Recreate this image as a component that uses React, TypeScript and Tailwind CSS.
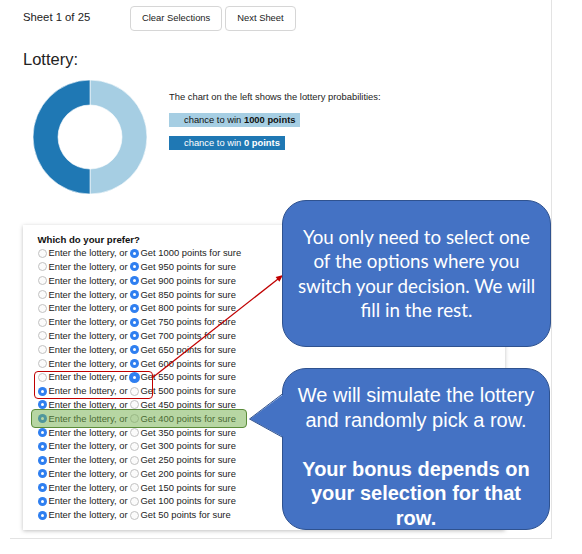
const rows = [1000, 950, 900, 850, 800, 750, 700, 650, 600, 550, 500, 450, 400, 350, 300, 250, 200, 150, 100, 50];

function Radio({ checked, focus }: { checked: boolean; focus?: boolean }) {
  if (checked) {
    return (
      <span
        className={`inline-flex items-center justify-center rounded-full bg-[#2f7ff0] shrink-0 ${
          focus ? 'w-[11px] h-[11px] -mx-[1px]' : 'w-[9px] h-[9px]'
        }`}
      >
        <span className="w-[3px] h-[3px] rounded-full bg-white" />
      </span>
    );
  }
  return <span className="inline-block w-[9px] h-[9px] rounded-full border border-[#c2c2c2] bg-[#fbfbfb] shrink-0" />;
}

export default function App() {
  return (
    <div className="relative w-[582px] h-[554px] bg-white overflow-hidden" style={{ fontFamily: '"Liberation Sans", Arial, sans-serif' }}>
      {/* page */}
      <div className="ml-[10px] w-[542px] h-[539px] border-r border-b border-[#e3e3e3] pl-[13px] pt-[6px] text-[#222]">
        {/* header */}
        <div className="flex items-center h-[25px]">
          <span className="w-[107px] text-[11.3px] -mt-[3px]">Sheet 1 of 25</span>
          <button className="h-[25px] px-[11px] border border-[#d6d6d6] rounded-[4px] bg-white text-[9.4px]">Clear Selections</button>
          <button className="ml-[3px] h-[25px] px-[11px] border border-[#d6d6d6] rounded-[4px] bg-white text-[9.4px]">Next Sheet</button>
        </div>

        <h1 className="mt-[19px] text-[16.5px] leading-[19px]">Lottery:</h1>

        {/* chart */}
        <div className="mt-[10px] flex">
          <svg width="116" height="116" viewBox="0 0 116 116" className="ml-[9px]">
            <path d="M 58 1 A 57 57 0 0 1 58 115 L 58 90 A 32 32 0 0 0 58 26 Z" fill="#a6cee3" stroke="#fff" strokeWidth="0.6" />
            <path d="M 58 115 A 57 57 0 0 1 58 1 L 58 26 A 32 32 0 0 0 58 90 Z" fill="#1f78b4" stroke="#fff" strokeWidth="0.6" />
          </svg>
          <div className="ml-[21px] pt-[12px] text-[9.4px]">
            <p className="leading-[12px]">The chart on the left shows the lottery probabilities:</p>
            <div className="mt-[10px] w-[131px] h-[14px] bg-[#a6cee3] pl-[15px] leading-[14px] text-[#111]">
              chance to win <b>1000 points</b>
            </div>
            <div className="mt-[9px] w-[116px] h-[14px] bg-[#1f78b4] pl-[15px] leading-[14px] text-white">
              chance to win <b>0 points</b>
            </div>
          </div>
        </div>

        {/* choice list */}
        <div className="mt-[30px] w-[482px] h-[305px] bg-white shadow-[0_1px_4px_rgba(0,0,0,0.25)] pl-[14.5px] pt-[7.5px]">
          <p className="font-bold text-[9.6px] leading-[13.8px] text-[#111]">Which do your prefer?</p>
          {rows.map((pts, i) => {
            const lottery = i >= 10;
            return (
              <div key={pts} className="flex items-center h-[13.8px] text-[9.4px] text-[#222]">
                <Radio checked={lottery} />
                <span className="ml-[2px]">Enter the lottery, or</span>
                <span className="ml-[2px] inline-flex">
                  <Radio checked={!lottery} focus={i === 9} />
                </span>
                <span className="ml-[2px]">Get {pts} points for sure</span>
              </div>
            );
          })}
        </div>
      </div>

      {/* highlight boxes */}
      <div className="absolute left-[34px] top-[371px] w-[119px] h-[28px] border-[1.5px] border-[#c00000] rounded-[4px]" />
      <div className="absolute left-[31px] top-[409px] w-[216px] h-[19px] border border-[#5b8c3a] rounded-[4px] bg-[#70ad47]/50" />

      {/* arrow */}
      <svg className="absolute left-0 top-0 pointer-events-none" width="582" height="554" viewBox="0 0 582 554">
        <line x1="152" y1="378" x2="278" y2="279" stroke="#c00000" strokeWidth="1.3" />
        <polygon points="283,275 279.4,281.7 275.6,276.9" fill="#c00000" />
      </svg>

      {/* callout 1 */}
      <div
        className="absolute left-[282px] top-[200px] w-[269px] h-[147px] rounded-[24px] bg-[#4472c4] border border-[#2f528f] flex items-center justify-center text-center text-white text-[18.8px] leading-[24.5px]"
        style={{ fontFamily: 'Lato, "Open Sans", sans-serif' }}
      >
        <p>
          You only need to select one
          <br />
          of the options where you
          <br />
          switch your decision. We will
          <br />
          fill in the rest.
        </p>
      </div>

      {/* callout 2 */}
      <div className="absolute left-[282px] top-[368px] w-[268px] h-[162px] rounded-[24px] bg-[#4472c4] border border-[#2f528f] pt-[14px] text-center text-white text-[20px] leading-[24.5px]">
        <svg className="absolute -left-[35px] top-[22px]" width="38" height="50" viewBox="0 0 38 50">
          <polygon points="37,2 2,28 37,47" fill="#4472c4" />
          <polyline points="35,2.5 1.5,28 35,46.5" fill="none" stroke="#2f528f" strokeWidth="1" />
        </svg>
        <p>
          We will simulate the lottery
          <br />
          and randomly pick a row.
        </p>
        <p className="mt-[24.5px] font-bold">
          Your bonus depends on
          <br />
          your selection for that
          <br />
          row.
        </p>
      </div>
    </div>
  );
}
